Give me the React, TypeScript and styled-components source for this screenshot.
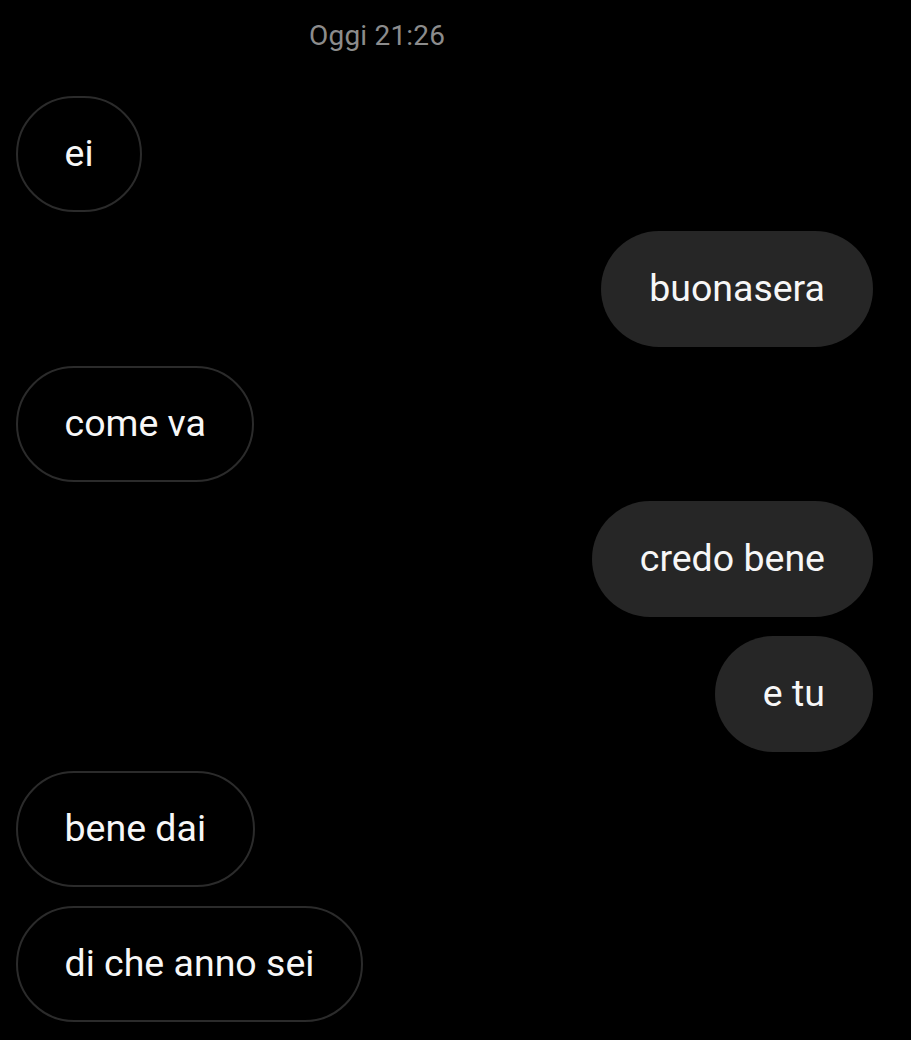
import React from "react";
import styled, { createGlobalStyle } from "styled-components";

const GlobalStyle = createGlobalStyle`
  html, body {
    margin: 0;
    padding: 0;
    background: #000;
  }
  body {
    font-family: Roboto, "Noto Sans", "Liberation Sans", sans-serif;
  }
`;

const Screen = styled.div`
  width: 911px;
  height: 1040px;
  overflow: hidden;
  background: #000;
  display: flex;
  flex-direction: column;
  box-sizing: border-box;
  padding: 17px 38px 0 16px;
`;

const Timestamp = styled.div`
  align-self: flex-start;
  margin-left: 293px;
  height: 38px;
  line-height: 38px;
  font-size: 28px;
  letter-spacing: 0.2px;
  color: #8c8c8c;
`;

const Thread = styled.div`
  display: flex;
  flex-direction: column;
  gap: 19px;
  margin-top: 41px;
`;

const Bubble = styled.div<{ $mine?: boolean }>`
  align-self: ${(p) => (p.$mine ? "flex-end" : "flex-start")};
  box-sizing: border-box;
  height: 116px;
  display: flex;
  align-items: center;
  justify-content: center;
  border-radius: 58px;
  padding: 0 ${(p) => (p.$mine ? "48px" : "46.5px")};
  background: ${(p) => (p.$mine ? "#262626" : "#000")};
  border: ${(p) => (p.$mine ? "none" : "2px solid #2b2b2b")};
  color: #f7f7f7;
  font-size: 37.5px;
  line-height: 1;
  white-space: nowrap;
`;

const messages: { text: string; mine: boolean }[] = [
  { text: "ei", mine: false },
  { text: "buonasera", mine: true },
  { text: "come va", mine: false },
  { text: "credo bene", mine: true },
  { text: "e tu", mine: true },
  { text: "bene dai", mine: false },
  { text: "di che anno sei", mine: false },
];

export default function App() {
  return (
    <>
      <GlobalStyle />
      <Screen>
        <Timestamp>Oggi 21:26</Timestamp>
        <Thread>
          {messages.map((m, i) => (
            <Bubble key={i} $mine={m.mine}>
              {m.text}
            </Bubble>
          ))}
        </Thread>
      </Screen>
    </>
  );
}
